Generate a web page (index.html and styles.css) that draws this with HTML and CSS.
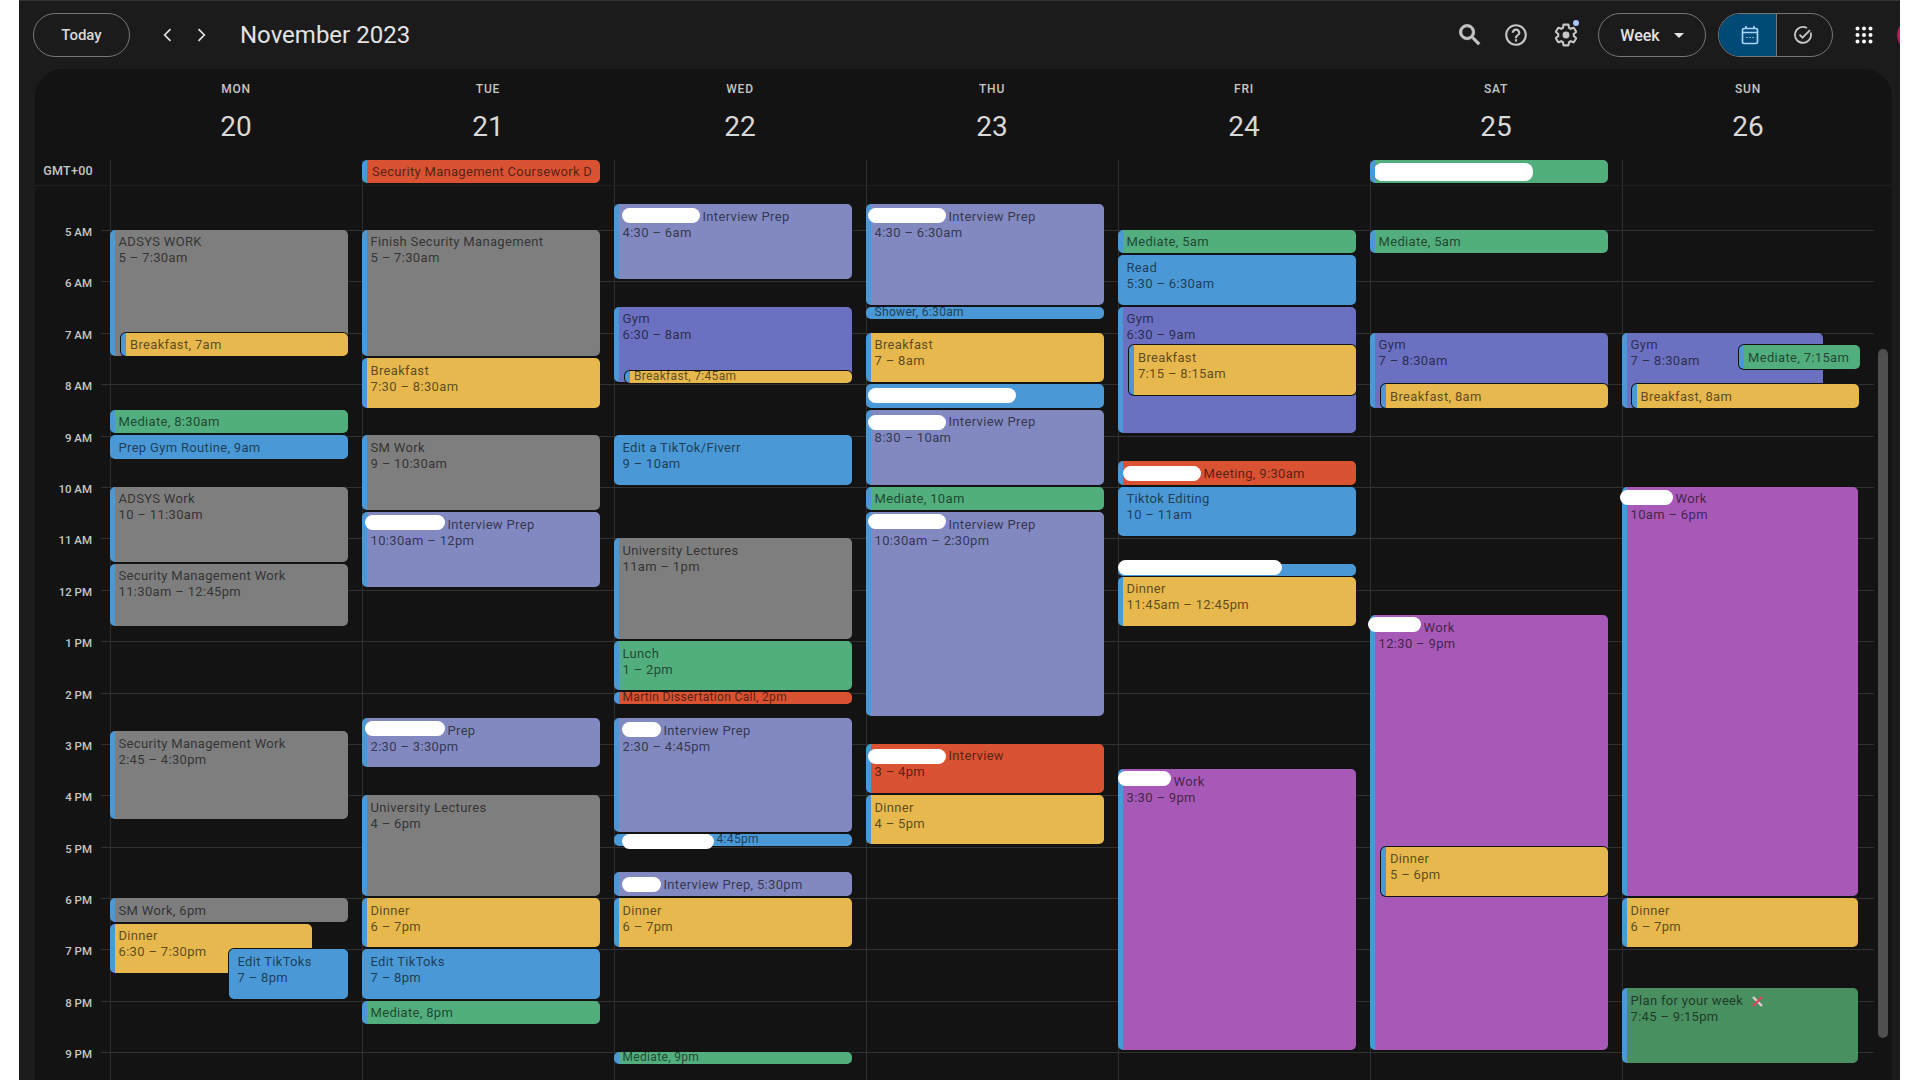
FILE: index.html
```html
<!DOCTYPE html>
<html lang="en">
<head>
    <meta charset="UTF-8">
    <title>Calendar - Week of November 20, 2023</title>
    <link rel="stylesheet" href="styles.css">
</head>
<body>

<div class="app">

    <header class="topbar">
        <button class="pill-btn today-btn">Today</button>
        <div class="nav-arrows">
            <button class="icon-btn"><svg width="20" height="20" viewBox="0 0 24 24"><path d="M15 5l-7 7 7 7" fill="none" stroke="#e3e3e3" stroke-width="2"/></svg></button>
            <button class="icon-btn"><svg width="20" height="20" viewBox="0 0 24 24"><path d="M9 5l7 7-7 7" fill="none" stroke="#e3e3e3" stroke-width="2"/></svg></button>
        </div>
        <h1 class="month-title">November 2023</h1>

        <div class="topbar-right">
            <button class="icon-btn search-btn"><svg width="28" height="28" viewBox="0 0 24 24"><path fill="#c4c7c5" stroke="#c4c7c5" stroke-width=".7" d="M15.5 14h-.79l-.28-.27C15.41 12.59 16 11.11 16 9.5 16 5.91 13.09 3 9.5 3S3 5.91 3 9.5 5.91 16 9.5 16c1.61 0 3.09-.59 4.23-1.57l.27.28v.79l5 4.99L20.49 19l-4.99-5zm-6 0C7.01 14 5 11.99 5 9.5S7.01 5 9.5 5 14 7.01 14 9.5 11.99 14 9.5 14z"/></svg></button>
            <button class="icon-btn help-btn"><svg width="26" height="26" viewBox="0 0 24 24"><path fill="#c4c7c5" d="M11 18h2v-2h-2v2zm1-16C6.48 2 2 6.48 2 12s4.48 10 10 10 10-4.48 10-10S17.52 2 12 2zm0 18c-4.41 0-8-3.59-8-8s3.59-8 8-8 8 3.59 8 8-3.59 8-8 8zm0-14c-2.21 0-4 1.79-4 4h2c0-1.1.9-2 2-2s2 .9 2 2c0 2-3 1.75-3 5h2c0-2.25 3-2.5 3-5 0-2.21-1.79-4-4-4z"/></svg></button>
            <button class="icon-btn gear-btn">
                <svg width="26" height="26" viewBox="0 0 24 24"><path fill="none" stroke="#c4c7c5" stroke-width="1.9" d="M19.14 12.94c.04-.3.06-.61.06-.94 0-.32-.02-.64-.07-.94l2.03-1.58c.18-.14.23-.41.12-.61l-1.92-3.32c-.12-.22-.37-.29-.59-.22l-2.39.96c-.5-.38-1.03-.7-1.62-.94l-.36-2.54c-.04-.24-.24-.41-.48-.41h-3.84c-.24 0-.43.17-.47.41l-.36 2.54c-.59.24-1.13.57-1.62.94l-2.39-.96c-.22-.08-.47 0-.59.22L2.74 8.87c-.12.21-.08.47.12.61l2.03 1.58c-.05.3-.09.63-.09.94s.02.64.07.94l-2.03 1.58c-.18.14-.23.41-.12.61l1.92 3.32c.12.22.37.29.59.22l2.39-.96c.5.38 1.03.7 1.62.94l.36 2.54c.05.24.24.41.48.41h3.84c.24 0 .44-.17.47-.41l.36-2.54c.59-.24 1.13-.56 1.62-.94l2.39.96c.22.08.47 0 .59-.22l1.92-3.32c.12-.22.07-.47-.12-.61l-2.01-1.58z"/><circle cx="12" cy="12" r="3.2" fill="#c4c7c5"/></svg>
                <span class="gear-dot"></span>
            </button>
            <button class="pill-btn week-btn">Week <span class="caret"></span></button>
            <div class="view-switch">
                <button class="switch-part switch-on"><svg width="20" height="20" viewBox="0 0 20 20" fill="none" stroke="#a8d4f5" stroke-width="1.7"><rect x="2.5" y="3.5" width="15" height="15" rx="1.5"/><path d="M2.5 7.5h15M6 1v3M14 1v3"/><path d="M6.2 12.5h1.4M9.3 12.5h1.4M12.4 12.5h1.4" stroke-width="1.2"/></svg></button>
                <button class="switch-part switch-off"><svg width="20" height="20" viewBox="0 0 20 20" fill="none" stroke="#c4c7c5" stroke-width="1.8"><path d="M17.6 7.5A8 8 0 1 1 14 3"/><path d="M6.5 9.7l3 3L17 5.2"/></svg></button>
            </div>
            <button class="icon-btn apps-btn"><svg width="18" height="18" viewBox="0 0 18 18" fill="#fff"><circle cx="2.5" cy="2.5" r="2"/><circle cx="9" cy="2.5" r="2"/><circle cx="15.5" cy="2.5" r="2"/><circle cx="2.5" cy="9" r="2"/><circle cx="9" cy="9" r="2"/><circle cx="15.5" cy="9" r="2"/><circle cx="2.5" cy="15.5" r="2"/><circle cx="9" cy="15.5" r="2"/><circle cx="15.5" cy="15.5" r="2"/></svg></button>
            <div class="avatar"></div>
        </div>
    </header>

    <main class="panel">
        <div class="week-head">
            <div class="day-head"><span class="day-name">MON</span><span class="day-num">20</span></div>
            <div class="day-head"><span class="day-name">TUE</span><span class="day-num">21</span></div>
            <div class="day-head"><span class="day-name">WED</span><span class="day-num">22</span></div>
            <div class="day-head"><span class="day-name">THU</span><span class="day-num">23</span></div>
            <div class="day-head"><span class="day-name">FRI</span><span class="day-num">24</span></div>
            <div class="day-head"><span class="day-name">SAT</span><span class="day-num">25</span></div>
            <div class="day-head"><span class="day-name">SUN</span><span class="day-num">26</span></div>
        </div>

        <div class="allday-row">
            <div class="tz-label">GMT+00</div>
            <div class="allday-cell"></div>
            <div class="allday-cell"><div class="allday-event red">Security Management Coursework D</div></div>
            <div class="allday-cell"></div>
            <div class="allday-cell"></div>
            <div class="allday-cell"></div>
            <div class="allday-cell"><div class="allday-event green"><span class="blot blot-tall" style="--w:159px;--x:-6px;--y:1px"></span></div></div>
            <div class="allday-cell"></div>
        </div>

        <div class="grid">
            <div class="hours">
                <div class="hour"><span class="hour-label">5 AM</span><i class="hour-line"></i></div>
                <div class="hour"><span class="hour-label">6 AM</span><i class="hour-line"></i></div>
                <div class="hour"><span class="hour-label">7 AM</span><i class="hour-line"></i></div>
                <div class="hour"><span class="hour-label">8 AM</span><i class="hour-line"></i></div>
                <div class="hour"><span class="hour-label">9 AM</span><i class="hour-line"></i></div>
                <div class="hour"><span class="hour-label">10 AM</span><i class="hour-line"></i></div>
                <div class="hour"><span class="hour-label">11 AM</span><i class="hour-line"></i></div>
                <div class="hour"><span class="hour-label">12 PM</span><i class="hour-line"></i></div>
                <div class="hour"><span class="hour-label">1 PM</span><i class="hour-line"></i></div>
                <div class="hour"><span class="hour-label">2 PM</span><i class="hour-line"></i></div>
                <div class="hour"><span class="hour-label">3 PM</span><i class="hour-line"></i></div>
                <div class="hour"><span class="hour-label">4 PM</span><i class="hour-line"></i></div>
                <div class="hour"><span class="hour-label">5 PM</span><i class="hour-line"></i></div>
                <div class="hour"><span class="hour-label">6 PM</span><i class="hour-line"></i></div>
                <div class="hour"><span class="hour-label">7 PM</span><i class="hour-line"></i></div>
                <div class="hour"><span class="hour-label">8 PM</span><i class="hour-line"></i></div>
                <div class="hour"><span class="hour-label">9 PM</span><i class="hour-line"></i></div>
            </div>

            <div class="days">
                <!-- mon -->
                <div class="day">
                    <div class="event grey" style="--at:5;--len:2.5"><div class="ev-title">ADSYS WORK</div><div>5 – 7:30am</div></div>
                    <div class="event yellow inset" style="--at:7;--len:.5"><div class="ev-title">Breakfast, 7am</div></div>
                    <div class="event green" style="--at:8.5;--len:.5"><div class="ev-title">Mediate, 8:30am</div></div>
                    <div class="event blue" style="--at:9;--len:.5"><div class="ev-title">Prep Gym Routine, 9am</div></div>
                    <div class="event grey" style="--at:10;--len:1.5"><div class="ev-title">ADSYS Work</div><div>10 – 11:30am</div></div>
                    <div class="event grey" style="--at:11.5;--len:1.25"><div class="ev-title">Security Management Work</div><div>11:30am – 12:45pm</div></div>
                    <div class="event grey" style="--at:14.75;--len:1.75"><div class="ev-title">Security Management Work</div><div>2:45 – 4:30pm</div></div>
                    <div class="event grey" style="--at:18;--len:.5"><div class="ev-title">SM Work, 6pm</div></div>
                    <div class="event yellow mon-dinner" style="--at:18.5;--len:1"><div class="ev-title">Dinner</div><div>6:30 – 7:30pm</div></div>
                    <div class="event blue mon-tiktok" style="--at:19;--len:1"><div class="ev-title">Edit TikToks</div><div>7 – 8pm</div></div>
                </div>
                <!-- tue -->
                <div class="day">
                    <div class="event grey" style="--at:5;--len:2.5"><div class="ev-title">Finish Security Management</div><div>5 – 7:30am</div></div>
                    <div class="event yellow" style="--at:7.5;--len:1"><div class="ev-title">Breakfast</div><div>7:30 – 8:30am</div></div>
                    <div class="event grey" style="--at:9;--len:1.5"><div class="ev-title">SM Work</div><div>9 – 10:30am</div></div>
                    <div class="event lavender" style="--at:10.5;--len:1.5"><div class="ev-title"><span class="blot" style="--w:80px;--x:-6px;--y:-1px"></span>Interview Prep</div><div>10:30am – 12pm</div></div>
                    <div class="event lavender" style="--at:14.5;--len:1"><div class="ev-title"><span class="blot" style="--w:80px;--x:-6px;--y:-1px"></span>Prep</div><div>2:30 – 3:30pm</div></div>
                    <div class="event grey" style="--at:16;--len:2"><div class="ev-title">University Lectures</div><div>4 – 6pm</div></div>
                    <div class="event yellow" style="--at:18;--len:1"><div class="ev-title">Dinner</div><div>6 – 7pm</div></div>
                    <div class="event blue" style="--at:19;--len:1"><div class="ev-title">Edit TikToks</div><div>7 – 8pm</div></div>
                    <div class="event green" style="--at:20;--len:.5"><div class="ev-title">Mediate, 8pm</div></div>
                </div>
                <!-- wed -->
                <div class="day">
                    <div class="event lavender" style="--at:4.5;--len:1.5"><div class="ev-title"><span class="blot" style="--w:78px;--x:-1px;--y:0px"></span>Interview Prep</div><div>4:30 – 6am</div></div>
                    <div class="event indigo" style="--at:6.5;--len:1.5"><div class="ev-title">Gym</div><div>6:30 – 8am</div></div>
                    <div class="event yellow inset tiny" style="--at:7.75;--len:.27"><div class="ev-title">Breakfast, 7:45am</div></div>
                    <div class="event blue" style="--at:9;--len:1"><div class="ev-title">Edit a TikTok/Fiverr</div><div>9 – 10am</div></div>
                    <div class="event grey" style="--at:11;--len:2"><div class="ev-title">University Lectures</div><div>11am – 1pm</div></div>
                    <div class="event green" style="--at:13;--len:1"><div class="ev-title">Lunch</div><div>1 – 2pm</div></div>
                    <div class="event red tiny" style="--at:14;--len:.27"><div class="ev-title">Martin Dissertation Call, 2pm</div></div>
                    <div class="event lavender" style="--at:14.5;--len:2.25"><div class="ev-title"><span class="blot" style="--w:39px;--x:-1px;--y:0px"></span>Interview Prep</div><div>2:30 – 4:45pm</div></div>
                    <div class="event blue tiny" style="--at:16.75;--len:.27"><div class="ev-title"><span class="blot" style="--w:92px;--x:-1px;--y:1px"></span>4:45pm</div></div>
                    <div class="event lavender" style="--at:17.5;--len:.5"><div class="ev-title"><span class="blot" style="--w:39px;--x:-1px;--y:1px"></span>Interview Prep, 5:30pm</div></div>
                    <div class="event yellow" style="--at:18;--len:1"><div class="ev-title">Dinner</div><div>6 – 7pm</div></div>
                    <div class="event green tiny" style="--at:21;--len:.27"><div class="ev-title">Mediate, 9pm</div></div>
                </div>
                <!-- thu -->
                <div class="day">
                    <div class="event lavender" style="--at:4.5;--len:2"><div class="ev-title"><span class="blot" style="--w:78px;--x:-7px;--y:0px"></span>Interview Prep</div><div>4:30 – 6:30am</div></div>
                    <div class="event blue tiny" style="--at:6.5;--len:.27"><div class="ev-title">Shower, 6:30am</div></div>
                    <div class="event yellow" style="--at:7;--len:1"><div class="ev-title">Breakfast</div><div>7 – 8am</div></div>
                    <div class="event blue" style="--at:8;--len:.5"><div class="ev-title"><span class="blot" style="--w:148px;--x:-7px;--y:0px"></span></div></div>
                    <div class="event lavender" style="--at:8.5;--len:1.5"><div class="ev-title"><span class="blot" style="--w:78px;--x:-7px;--y:2px"></span>Interview Prep</div><div>8:30 – 10am</div></div>
                    <div class="event green" style="--at:10;--len:.5"><div class="ev-title">Mediate, 10am</div></div>
                    <div class="event lavender" style="--at:10.5;--len:4"><div class="ev-title"><span class="blot" style="--w:78px;--x:-7px;--y:-2px"></span>Interview Prep</div><div>10:30am – 2:30pm</div></div>
                    <div class="event red" style="--at:15;--len:1"><div class="ev-title"><span class="blot" style="--w:78px;--x:-7px;--y:2px"></span>Interview</div><div>3 – 4pm</div></div>
                    <div class="event yellow" style="--at:16;--len:1"><div class="ev-title">Dinner</div><div>4 – 5pm</div></div>
                </div>
                <!-- fri -->
                <div class="day">
                    <div class="event green" style="--at:5;--len:.5"><div class="ev-title">Mediate, 5am</div></div>
                    <div class="event blue" style="--at:5.5;--len:1"><div class="ev-title">Read</div><div>5:30 – 6:30am</div></div>
                    <div class="event indigo" style="--at:6.5;--len:2.5"><div class="ev-title">Gym</div><div>6:30 – 9am</div></div>
                    <div class="event yellow inset" style="--at:7.25;--len:1"><div class="ev-title">Breakfast</div><div>7:15 – 8:15am</div></div>
                    <div class="event red" style="--at:9.5;--len:.5"><div class="ev-title"><span class="blot" style="--w:78px;--x:-4px;--y:1px"></span>Meeting, 9:30am</div></div>
                    <div class="event blue" style="--at:10;--len:1"><div class="ev-title">Tiktok Editing</div><div>10 – 11am</div></div>
                    <div class="event blue tiny" style="--at:11.5;--len:.27"><div class="ev-title"><span class="blot" style="--w:164px;--x:-9px;--y:-3px"></span></div></div>
                    <div class="event yellow" style="--at:11.75;--len:1"><div class="ev-title">Dinner</div><div>11:45am – 12:45pm</div></div>
                    <div class="event magenta" style="--at:15.5;--len:5.5"><div class="ev-title"><span class="blot" style="--w:53px;--x:-9px;--y:-2px"></span>Work</div><div>3:30 – 9pm</div></div>
                </div>
                <!-- sat -->
                <div class="day">
                    <div class="event green" style="--at:5;--len:.5"><div class="ev-title">Mediate, 5am</div></div>
                    <div class="event indigo" style="--at:7;--len:1.5"><div class="ev-title">Gym</div><div>7 – 8:30am</div></div>
                    <div class="event yellow inset" style="--at:8;--len:.5"><div class="ev-title">Breakfast, 8am</div></div>
                    <div class="event magenta" style="--at:12.5;--len:8.5"><div class="ev-title"><span class="blot" style="--w:53px;--x:-11px;--y:-2px"></span>Work</div><div>12:30 – 9pm</div></div>
                    <div class="event yellow inset" style="--at:17;--len:1"><div class="ev-title">Dinner</div><div>5 – 6pm</div></div>
                </div>
                <!-- sun -->
                <div class="day">
                    <div class="event indigo sun-gym" style="--at:7;--len:1.5"><div class="ev-title">Gym</div><div>7 – 8:30am</div></div>
                    <div class="event green sun-mediate" style="--at:7.25;--len:.5"><div class="ev-title">Mediate, 7:15am</div></div>
                    <div class="event yellow inset" style="--at:8;--len:.5"><div class="ev-title">Breakfast, 8am</div></div>
                    <div class="event magenta" style="--at:10;--len:8"><div class="ev-title"><span class="blot" style="--w:53px;--x:-11px;--y:0px"></span>Work</div><div>10am – 6pm</div></div>
                    <div class="event yellow" style="--at:18;--len:1"><div class="ev-title">Dinner</div><div>6 – 7pm</div></div>
                    <div class="event forest" style="--at:19.75;--len:1.5"><div class="ev-title">Plan for your week<svg class="ev-emoji" width="13" height="13" viewBox="0 0 13 13" fill="none" stroke-width="2.4"><path d="M2 2l9 9" stroke="#e6c8cf"/><path d="M11 2L2 11" stroke="#d9485f"/></svg></div><div>7:45 – 9:15pm</div></div>
                </div>
            </div>

            <div class="scroll-thumb"></div>
        </div>
    </main>
</div>

</body>
</html>
```

FILE: styles.css
```css
* {
    box-sizing: border-box;
}
body {
    margin: 0;
    background-color: white;
    font-family: Roboto, "Open Sans", Arial, sans-serif;
    overflow: hidden;
}
button {
    font-family: inherit;
    background: none;
    border: none;
    padding: 0;
    color: inherit;
}

.app {
    width: 1881px;
    height: 1080px;
    margin-left: 19px;
    background-color: #1b1b1b;
    overflow: hidden;
    color: #e3e3e3;
}

/* top bar */
.topbar {
    display: flex;
    align-items: center;
    height: 69px;
    padding: 0 0 0 14px;
    border-top: 1px solid #333;
}
.pill-btn {
    height: 44px;
    border: 1px solid #747775;
    border-radius: 22px;
    font-size: 15px;
    font-weight: 500;
    color: #e3e3e3;
}
.today-btn {
    width: 97px;
    color: #d8d8d8;
}
.nav-arrows {
    display: flex;
    gap: 1px;
    margin-left: 22px;
}
.icon-btn {
    display: flex;
    align-items: center;
    justify-content: center;
    position: relative;
    width: 32px;
    height: 40px;
}
.month-title {
    margin: 0 0 0 23px;
    font-size: 24px;
    font-weight: 400;
    color: #e3e3e3;
}
.topbar-right {
    display: flex;
    align-items: center;
    margin-left: auto;
}
.search-btn, .help-btn, .gear-btn, .apps-btn {
    width: 40px;
}
.help-btn {
    margin-left: 6px;
}
.gear-btn {
    margin-left: 10px;
}
.gear-dot {
    position: absolute;
    top: 5px;
    right: 7px;
    width: 6px;
    height: 6px;
    border-radius: 50%;
    background-color: #a8c7fa;
}
.week-btn {
    display: flex;
    align-items: center;
    justify-content: center;
    gap: 14px;
    width: 108px;
    margin-left: 12px;
    font-size: 16px;
}
.caret {
    width: 0;
    height: 0;
    border-left: 5px solid transparent;
    border-right: 5px solid transparent;
    border-top: 5px solid #e3e3e3;
}
.view-switch {
    display: flex;
    width: 115px;
    height: 44px;
    margin-left: 12px;
    border: 1px solid #747775;
    border-radius: 22px;
    overflow: hidden;
}
.switch-part {
    display: flex;
    align-items: center;
    justify-content: center;
    flex: 1;
}
.switch-on {
    flex: none;
    width: 58px;
    padding-left: 4px;
    background-color: #004a77;
    border-right: 1px solid #747775;
}
.switch-off {
    padding-right: 3px;
}
.apps-btn {
    margin-left: 11px;
}
.avatar {
    flex: none;
    width: 32px;
    height: 32px;
    margin-left: 13px;
    margin-right: -29px;
    border-radius: 50%;
    background-color: #c2185b;
}

/* week panel */
.panel {
    height: 1011px;
    margin: 0 8px 0 16px;
    background-color: #131314;
    border-radius: 28px 28px 0 0;
}
.week-head {
    display: grid;
    grid-template-columns: repeat(7, 252px);
    height: 91px;
    padding-left: 75px;
}
.day-head {
    display: flex;
    flex-direction: column;
    align-items: center;
    padding-top: 12px;
}
.day-name {
    font-size: 12px;
    line-height: 16px;
    font-weight: 500;
    letter-spacing: .8px;
    color: #c4c7c5;
}
.day-num {
    margin-top: 12px;
    font-size: 28px;
    line-height: 36px;
    color: #d8d8d8;
}

.allday-row {
    display: grid;
    grid-template-columns: 75px repeat(7, 252px);
    height: 26px;
    border-bottom: 1px solid #1d1e20;
}
.tz-label {
    padding: 3px 17px 0 0;
    text-align: right;
    font-size: 12.5px;
    letter-spacing: .3px;
    line-height: 16px;
    font-weight: 500;
    color: #c4c7c5;
}
.allday-cell {
    border-left: 1px solid #2e2f31;
}
.allday-event {
    display: flex;
    align-items: center;
    width: 238px;
    height: 23px;
    margin-left: -1px;
    padding-left: 5px;
    border-left: 5px solid #4a98d5;
    border-radius: 5px;
    font-size: 13px;
    letter-spacing: .3px;
    white-space: nowrap;
    overflow: hidden;
    color: rgba(0, 0, 0, .62);
}

/* hour rows */
.grid {
    position: relative;
    height: 894px;
    overflow: hidden;
}
.hours {
    padding-top: 44px;
}
.hour {
    display: flex;
    align-items: flex-start;
    height: 51.4px;
}
.hour-label {
    width: 57px;
    height: 16px;
    margin-top: -6px;
    text-align: right;
    font-size: 11.5px;
    line-height: 16px;
    font-weight: 500;
    color: #c4c7c5;
}
.hour-line {
    width: 1773px;
    height: 1px;
    margin-left: 9px;
    background-color: #303133;
}
.days {
    position: absolute;
    top: 0;
    left: 75px;
    display: grid;
    grid-template-columns: repeat(7, 252px);
    height: 100%;
}
.day {
    position: relative;
    border-left: 1px solid #2e2f31;
}

/* events */
.event {
    position: absolute;
    top: calc((var(--at) - 5) * 51.4px + 43.7px);
    left: -1.5px;
    width: 238.5px;
    height: calc(var(--len) * 51.4px - 2px);
    padding: 4.7px 0 0 4px;
    border-left: 5px solid #4a98d5;
    border-radius: 5px;
    font-size: 13px;
    letter-spacing: .33px;
    line-height: 16px;
    white-space: nowrap;
    color: rgba(0, 0, 0, .62);
}
.day:last-child .event {
    width: 236.5px;
}
.ev-title {
    display: flex;
    align-items: flex-start;
}
.ev-emoji {
    margin: 2px 0 0 8px;
}
.event.inset {
    left: 10px;
    width: 227px;
    box-shadow: 0 0 0 1px #131314;
}
.day:last-child .event.inset {
    left: 8.5px;
    width: 227px;
}
.event.tiny {
    padding-top: 0;
    font-size: 12px;
    line-height: 11px;
}
.event.mon-dinner {
    width: 202px;
}
.event.mon-tiktok {
    left: 117.5px;
    width: 119px;
    box-shadow: 0 0 0 1px #131314;
}
.day:last-child .event.sun-gym {
    width: 201px;
}
.day:last-child .event.sun-mediate {
    left: 116px;
    width: 121px;
    box-shadow: 0 0 0 1px #131314;
}
.grey { background-color: #7e7e7e; }
.yellow { background-color: #e6b84e; }
.blue { background-color: #4a98d5; }
.green { background-color: #52ae7c; }
.lavender { background-color: #8288c0; }
.indigo { background-color: #6b70c0; }
.red { background-color: #d95232; }
.magenta { background-color: #a659b7; }
.forest { background-color: #498f60; }

/* white patches over names */
.blot {
    flex: none;
    width: var(--w);
    height: 15px;
    margin-left: var(--x);
    margin-top: calc(var(--y) - 1px);
    margin-right: 3px;
    border-radius: 8px;
    background-color: white;
}
.blot-tall {
    height: 18px;
}

.scroll-thumb {
    position: absolute;
    top: 163px;
    left: 1843px;
    width: 10px;
    height: 689px;
    border-radius: 5px;
    background-color: #4f4f4f;
}
```
